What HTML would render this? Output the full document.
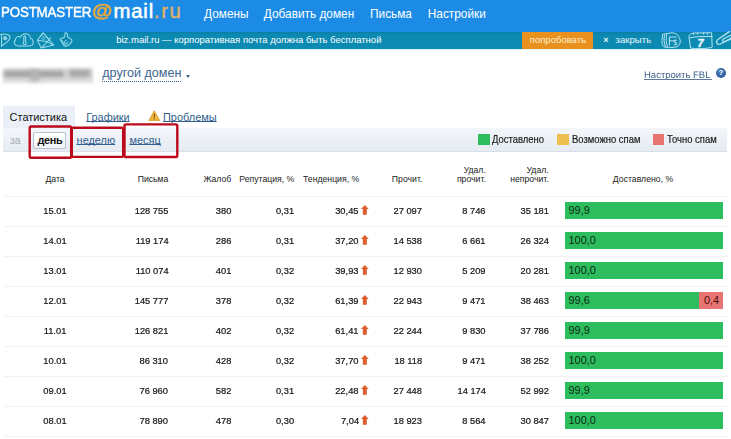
<!DOCTYPE html>
<html lang="ru"><head><meta charset="utf-8"><title>Postmaster Mail.ru</title>
<style>
html,body{margin:0;padding:0;background:#fff;}
*{text-decoration-skip-ink:none;}
body{width:731px;height:439px;position:relative;overflow:hidden;font-family:"Liberation Sans",sans-serif;color:#222;}
.abs{position:absolute;white-space:nowrap;}
#hdr{position:absolute;left:0;top:0;width:731px;height:32px;background:#1b8be6;}
#teal{position:absolute;left:0;top:31.8px;width:731px;height:17.5px;background:linear-gradient(#0a7fa6 0,#0c8ab1 3px,#0c8ab1 100%);}
#tealb{position:absolute;left:0;top:49.3px;width:731px;height:1.2px;background:linear-gradient(#cfe8f1,#fff);}
.nav{position:absolute;top:7px;font-size:11.85px;line-height:14px;color:#fff;white-space:nowrap;}
.logo1{position:absolute;left:1.3px;top:3.2px;font-size:15.5px;line-height:18px;color:#fff;letter-spacing:-0.2px;transform-origin:0 50%;transform:scaleX(0.86);white-space:nowrap;-webkit-text-stroke:0.45px #fff;}
.logoat{position:absolute;left:92.4px;top:-3.5px;font-size:19px;line-height:28px;color:#e9a93c;font-weight:bold;transform-origin:0 50%;transform:scaleX(1.1);-webkit-text-stroke:0.5px #e9a93c;}
.logo2{position:absolute;left:113.6px;top:-1px;font-size:20.3px;line-height:24px;color:#fff;letter-spacing:0.8px;white-space:nowrap;-webkit-text-stroke:0.55px #fff;}
.logo3{position:absolute;left:154px;top:-1px;font-size:20.3px;line-height:24px;color:#e2b163;white-space:nowrap;letter-spacing:1.6px;-webkit-text-stroke:0.4px #e2b163;}
.tt{position:absolute;top:33px;font-size:9.6px;line-height:13px;color:#fff;white-space:nowrap;}
#try{position:absolute;left:522px;top:31.8px;width:70.6px;height:17.5px;background:#e8911f;}
.dom{position:absolute;left:102.3px;top:66.8px;font-size:12.55px;line-height:13.9px;color:#3d658f;border-bottom:1px dotted #3d5f85;white-space:nowrap;}
.caret{position:absolute;left:185.5px;top:74.6px;width:0;height:0;border-left:2.7px solid transparent;border-right:2.7px solid transparent;border-top:3.1px solid #41648a;}
.fbl{position:absolute;left:644.1px;top:69.6px;font-size:9.55px;line-height:12px;color:#3b5f88;white-space:pre;text-rendering:geometricPrecision;transform:scaleX(0.995);transform-origin:0 50%;}
.help{position:absolute;left:716px;top:68.3px;width:10px;height:10px;border-radius:50%;background:radial-gradient(circle at 40% 35%,#4a7fbe,#1f4f8c);color:#fff;font-size:8px;line-height:10px;font-weight:bold;text-align:center;}
#tab1{position:absolute;left:2.5px;top:105.6px;width:72.3px;height:24px;background:#ebf0f8;}
.tab{position:absolute;top:110.8px;font-size:10.95px;line-height:13px;white-space:nowrap;}
a,.lnk{color:#335f8e;text-decoration:underline;text-underline-offset:0.3px;}
#tool{position:absolute;left:2.5px;top:128px;width:724.5px;height:24.4px;background:linear-gradient(#f3f6fa,#e6ebf2);border-bottom:1px solid #d9dfe7;box-sizing:border-box;}
.per{position:absolute;top:134px;font-size:10.95px;line-height:13px;white-space:nowrap;}
#day{position:absolute;left:33px;top:131.6px;width:33.4px;height:17px;box-sizing:border-box;border:1px solid #b9c3cf;border-radius:2px;background:linear-gradient(#fff,#f0f3f7);}
.rb{position:absolute;border:2.4px solid #bb0a1c;border-radius:2.5px;box-sizing:border-box;}
.lg{position:absolute;top:134px;height:11px;width:11.5px;}
.lgt{position:absolute;top:133px;font-size:10.8px;line-height:13px;white-space:nowrap;transform-origin:0 50%;transform:scaleX(0.875);color:#1c1c1c;-webkit-text-stroke:0.2px #1c1c1c;}
.th{position:absolute;font-size:8.68px;line-height:9px;color:#222;white-space:nowrap;}
.th.r{text-align:right;}
.row{position:absolute;left:0;width:731px;height:30px;}
.row:before{content:'';position:absolute;left:4px;top:0;width:724px;height:1px;background:#f0f1f4;}
.row .c{position:absolute;top:8.7px;font-size:9.8px;line-height:12px;white-space:nowrap;color:#151515;transform:scaleX(0.952);transform-origin:50% 50%;-webkit-text-stroke:0.22px #151515;}
.row .c.r{text-align:right;transform-origin:100% 50%;}
.row .arr{position:absolute;left:361.2px;top:8.8px;width:7.7px;height:10px;}
.row .bar{position:absolute;left:565px;top:6px;width:157.8px;height:17.3px;background:#2dbd5f;font-size:10.85px;line-height:17px;color:#0b2a12;box-sizing:border-box;padding-left:3.6px;white-space:nowrap;}
.row .bar.red{background:#e87573;color:#4a0d0d;padding-left:4.6px;}
</style></head><body>
<div id="hdr"></div>
<div class="logo1">POSTMASTER</div>
<div class="logoat">@</div>
<div class="logo2">mail</div>
<div class="logo3">.ru</div>
<div class="nav" style="left:204px">Домены</div>
<div class="nav" style="left:263.8px">Добавить домен</div>
<div class="nav" style="left:370px">Письма</div>
<div class="nav" style="left:427.8px">Настройки</div>
<div id="teal"></div><div id="tealb"></div>
<svg class="abs" style="left:0;top:31px;width:80px;height:19px" viewBox="0 31 80 19" fill="none" stroke="#9bdcee" stroke-width="1.05" stroke-linecap="round" stroke-linejoin="round">
<!-- pin -->
<path d="M1.6 35 V46.2 M-1 34.8 C3 33.8 8.2 33.8 9.8 36.4 C10.6 38.4 9.4 39.8 8 41.2 L1.4 46.4"/>
<circle cx="5.2" cy="38.2" r="2.1" fill="#8fcfe2" stroke="none"/>
<!-- cloud -->
<path d="M18.4 45.9 C14.4 46 13.2 42 15.4 40 C15.2 37 18.6 35.6 20.6 37.2 C21.6 34 25.6 32.8 28.4 34.6 C30.2 35.8 30.8 37.4 30.6 38.6 C33.6 39 34 43.4 32.2 45 C31.2 46 29.6 46 28 45.9 Z"/>
<path d="M23.8 37 v5 a1.5 1.5 0 1 0 1.8 0 v-5 a0.9 0.9 0 0 0 -1.8 0"/>
<!-- envelope -->
<path d="M37.4 40.2 L43 32.8 L53.6 45 L41.2 48 Z"/>
<path d="M37.4 40.2 L46.6 41.6 L53.6 45 M50.8 37.8 L41.8 47.6"/>
<path d="M40.4 36.6 L43.4 33 L48.8 39 M42.6 36.4 l2.6 1.6 M41.6 38.6 l2.4 0.8" stroke-width="0.9"/>
<!-- hand -->
<path d="M60 39.2 L64.6 37 L65.2 32.8 C67 32.4 68 34.6 67.6 36.8 L71.6 39.6 C72.6 41 71.4 42.6 70.4 43 C70.2 44.4 68.8 45.4 67.8 45.2 C66.8 46.2 65 46.2 63.8 45.6 Z"/>
<path d="M61.8 40.4 l3.4 5 M66 40.4 a1.7 1.7 0 1 0 2 1.8" stroke-width="0.9"/>
</svg>
<svg class="abs" style="left:655px;top:31px;width:76px;height:19px" viewBox="655 31 76 19" fill="none" stroke="#b4e4f2" stroke-width="1" stroke-linecap="round" stroke-linejoin="round">
<!-- wallet / money -->
<path d="M663 34.2 L672 32.8 C676 33 678.6 35 678.8 37.4 C680.6 38.6 680.8 43 679.2 44.6 C678.8 46.6 675.6 47.6 672 47.4 L665 47.2 C662.6 46.6 661.8 44.6 662 41 Z"/>
<path d="M664.6 35 C663.6 38.6 663.8 43.4 665.6 46.8 M666.6 34.6 C665.8 38.4 666 43.2 667.6 46.8"/>
<path d="M669.4 37 h6.6 M669.4 37 v8 M669.4 40.8 h5.2 M676.6 40.2 c-2.6 -0.6 -3.4 1.8 -1.2 2.4 c2.2 0.6 1.6 2.8 -1.2 2.2" stroke-width="1.1"/>
<!-- calendar -->
<path d="M689 36 C690 33.6 692 33 695 33 L711.6 32.8 L712.2 47.2 C708 48.8 696 48.8 691 48.2 Z"/>
<path d="M690 37.8 C696 36.4 706 36.2 712 36.6"/>
<path d="M693.4 33.6 v1.2 M697.4 33.2 v1.2 M703.6 33 v1.2 M707.6 33 v1.2" stroke-width="1"/>
<text x="697.4" y="46.6" font-family="Liberation Sans, sans-serif" font-size="11" font-weight="bold" font-style="italic" fill="#e6f6fb" stroke="#e6f6fb" stroke-width="0.4">7</text>
<!-- paperclip -->
<path d="M729.4 31.6 L718.2 39.2 C715.2 41.4 716.8 45.8 720.4 44 L733 37.2" stroke-width="1.3"/>
<path d="M733 34.2 L723.8 38.8 C721.8 39.8 722.6 42.4 724.8 41.4 L733 38.6" stroke-width="1.1"/>
</svg>

<div class="tt" style="left:116.2px;font-size:9.5px">biz.mail.ru — корпоративная почта должна быть бесплатной</div>
<div id="try"></div>
<div class="tt" style="left:529.8px;font-size:9.5px;color:#fff1cf">попробовать</div>
<div class="tt" style="left:603.3px;font-size:9px;top:33.6px;font-weight:bold;color:#e4f4fb">×</div>
<div class="tt" style="left:615.6px;font-size:9.6px;color:#e8f6fc">закрыть</div>

<div class="abs" style="left:0;top:60px;width:100px;height:30px;overflow:hidden">
<div style="position:absolute;left:3px;top:7.6px;width:90px;height:15px;background:#dedede;filter:blur(1.8px)"></div>
<div style="position:absolute;left:4px;top:10.8px;width:60px;height:6.5px;background:#9c9c9e;filter:blur(2px)"></div>
<div style="position:absolute;left:69px;top:9.8px;width:21px;height:7px;background:#a2a2a4;filter:blur(2px)"></div>
<div style="position:absolute;left:30px;top:10px;width:9px;height:11px;background:#b4b4b4;filter:blur(2px)"></div>
</div>
<div class="dom">другой домен</div><div class="caret"></div>
<div class="fbl">Настроить FBL</div><div class="abs" style="left:644px;top:79px;width:68.2px;height:1px;background:#5d7a9c"></div>
<div class="help">?</div>

<div id="tab1"></div>
<div class="tab" style="left:9.6px;color:#111">Статистика</div>
<div class="tab lnk" style="left:86.2px">Графики</div>
<svg class="abs" style="left:147.6px;top:110.3px;width:12.6px;height:11.2px" viewBox="0 0 13 12"><path d="M6.5 0.8 L12.3 11.2 H0.7 Z" fill="#f0b83c" stroke="#d89a1c" stroke-width="0.8" stroke-linejoin="round"/><rect x="5.9" y="4" width="1.2" height="4" fill="#7a4a00"/><rect x="5.9" y="8.8" width="1.2" height="1.2" fill="#7a4a00"/></svg>
<div class="tab lnk" style="left:163px">Проблемы</div>
<div id="tool"></div>
<div class="per" style="left:10px;color:#a3aab4;font-size:10.3px">за</div>
<div id="day"></div>
<div class="per" style="left:37.6px;color:#111;font-weight:bold;letter-spacing:-0.45px">день</div>
<div class="per lnk" style="left:76.6px">неделю</div>
<div class="per lnk" style="left:129.4px">месяц</div>

<svg class="abs" style="left:20px;top:118px;width:170px;height:46px" viewBox="20 118 170 46" fill="none" stroke="#bb0a1c" stroke-width="2.4">
<rect x="29.7" y="126.5" width="41.5" height="31.3" rx="1.6"/>
<rect x="71.8" y="127.7" width="51.4" height="29.2" rx="1.6"/>
<rect x="124.5" y="124.4" width="52.8" height="32.6" rx="1.6"/>
</svg>
<div class="lg" style="left:478px;background:#2dbd5f"></div><div class="lgt" style="left:492.4px">Доставлено</div>
<div class="lg" style="left:557.3px;background:#ecc04e"></div><div class="lgt" style="left:571.8px">Возможно спам</div>
<div class="lg" style="left:652.8px;background:#e8746f"></div><div class="lgt" style="left:667.4px">Точно спам</div>

<div class="th" style="left:30px;width:50px;text-align:center;top:175px">Дата</div>
<div class="th r" style="right:562.6px;top:175px">Письма</div>
<div class="th r" style="right:499.7px;top:175px">Жалоб</div>
<div class="th r" style="right:436.7px;top:175px">Репутация, %</div>
<div class="th r" style="right:371.8px;top:175px">Тенденция, %</div>
<div class="th r" style="right:308.7px;top:175px">Прочит.</div>
<div class="th r" style="right:245.2px;top:166.3px">Удал.<br>прочит.</div>
<div class="th r" style="right:182.3px;top:166.3px">Удал.<br>непрочит.</div>
<div class="th" style="left:593px;width:100px;text-align:center;top:175px">Доставлено, %</div>
<div class="row" style="top:196px">
<span class="c" style="left:30px;width:50px;text-align:center">15.01</span>
<span class="c r" style="right:562.6px">128 755</span>
<span class="c r" style="right:499.7px">380</span>
<span class="c r" style="right:436.5px">0,31</span>
<span class="c r" style="right:372.2px">30,45</span>
<span class="c r" style="right:308.7px">27 097</span>
<span class="c r" style="right:245.5px">8 746</span>
<span class="c r" style="right:181.7px">35 181</span>
<svg class="arr" viewBox="0 0 7.7 10"><path d="M3.85 0 L7.7 3.9 H5.85 V9.6 Q3.85 10.4 1.85 9.6 V3.9 H0 Z" fill="#dd5f30"/></svg>
<span class="bar">99,9</span>
</div>
<div class="row" style="top:226px">
<span class="c" style="left:30px;width:50px;text-align:center">14.01</span>
<span class="c r" style="right:562.6px">119 174</span>
<span class="c r" style="right:499.7px">286</span>
<span class="c r" style="right:436.5px">0,31</span>
<span class="c r" style="right:372.2px">37,20</span>
<span class="c r" style="right:308.7px">14 538</span>
<span class="c r" style="right:245.5px">6 661</span>
<span class="c r" style="right:181.7px">26 324</span>
<svg class="arr" viewBox="0 0 7.7 10"><path d="M3.85 0 L7.7 3.9 H5.85 V9.6 Q3.85 10.4 1.85 9.6 V3.9 H0 Z" fill="#dd5f30"/></svg>
<span class="bar">100,0</span>
</div>
<div class="row" style="top:256px">
<span class="c" style="left:30px;width:50px;text-align:center">13.01</span>
<span class="c r" style="right:562.6px">110 074</span>
<span class="c r" style="right:499.7px">401</span>
<span class="c r" style="right:436.5px">0,32</span>
<span class="c r" style="right:372.2px">39,93</span>
<span class="c r" style="right:308.7px">12 930</span>
<span class="c r" style="right:245.5px">5 209</span>
<span class="c r" style="right:181.7px">20 281</span>
<svg class="arr" viewBox="0 0 7.7 10"><path d="M3.85 0 L7.7 3.9 H5.85 V9.6 Q3.85 10.4 1.85 9.6 V3.9 H0 Z" fill="#dd5f30"/></svg>
<span class="bar">100,0</span>
</div>
<div class="row" style="top:286px">
<span class="c" style="left:30px;width:50px;text-align:center">12.01</span>
<span class="c r" style="right:562.6px">145 777</span>
<span class="c r" style="right:499.7px">378</span>
<span class="c r" style="right:436.5px">0,32</span>
<span class="c r" style="right:372.2px">61,39</span>
<span class="c r" style="right:308.7px">22 943</span>
<span class="c r" style="right:245.5px">9 471</span>
<span class="c r" style="right:181.7px">38 463</span>
<svg class="arr" viewBox="0 0 7.7 10"><path d="M3.85 0 L7.7 3.9 H5.85 V9.6 Q3.85 10.4 1.85 9.6 V3.9 H0 Z" fill="#dd5f30"/></svg>
<span class="bar" style="width:134.3px">99,6</span><span class="bar red" style="left:699.3px;width:23.5px">0,4</span>
</div>
<div class="row" style="top:316px">
<span class="c" style="left:30px;width:50px;text-align:center">11.01</span>
<span class="c r" style="right:562.6px">126 821</span>
<span class="c r" style="right:499.7px">402</span>
<span class="c r" style="right:436.5px">0,32</span>
<span class="c r" style="right:372.2px">61,41</span>
<span class="c r" style="right:308.7px">22 244</span>
<span class="c r" style="right:245.5px">9 830</span>
<span class="c r" style="right:181.7px">37 786</span>
<svg class="arr" viewBox="0 0 7.7 10"><path d="M3.85 0 L7.7 3.9 H5.85 V9.6 Q3.85 10.4 1.85 9.6 V3.9 H0 Z" fill="#dd5f30"/></svg>
<span class="bar">99,9</span>
</div>
<div class="row" style="top:346px">
<span class="c" style="left:30px;width:50px;text-align:center">10.01</span>
<span class="c r" style="right:562.6px">86 310</span>
<span class="c r" style="right:499.7px">428</span>
<span class="c r" style="right:436.5px">0,32</span>
<span class="c r" style="right:372.2px">37,70</span>
<span class="c r" style="right:308.7px">18 118</span>
<span class="c r" style="right:245.5px">9 471</span>
<span class="c r" style="right:181.7px">38 252</span>
<svg class="arr" viewBox="0 0 7.7 10"><path d="M3.85 0 L7.7 3.9 H5.85 V9.6 Q3.85 10.4 1.85 9.6 V3.9 H0 Z" fill="#dd5f30"/></svg>
<span class="bar">100,0</span>
</div>
<div class="row" style="top:376px">
<span class="c" style="left:30px;width:50px;text-align:center">09.01</span>
<span class="c r" style="right:562.6px">76 960</span>
<span class="c r" style="right:499.7px">582</span>
<span class="c r" style="right:436.5px">0,31</span>
<span class="c r" style="right:372.2px">22,48</span>
<span class="c r" style="right:308.7px">27 448</span>
<span class="c r" style="right:245.5px">14 174</span>
<span class="c r" style="right:181.7px">52 992</span>
<svg class="arr" viewBox="0 0 7.7 10"><path d="M3.85 0 L7.7 3.9 H5.85 V9.6 Q3.85 10.4 1.85 9.6 V3.9 H0 Z" fill="#dd5f30"/></svg>
<span class="bar">99,9</span>
</div>
<div class="row" style="top:406px">
<span class="c" style="left:30px;width:50px;text-align:center">08.01</span>
<span class="c r" style="right:562.6px">78 890</span>
<span class="c r" style="right:499.7px">478</span>
<span class="c r" style="right:436.5px">0,30</span>
<span class="c r" style="right:372.2px">7,04</span>
<span class="c r" style="right:308.7px">18 923</span>
<span class="c r" style="right:245.5px">8 564</span>
<span class="c r" style="right:181.7px">30 847</span>
<svg class="arr" viewBox="0 0 7.7 10"><path d="M3.85 0 L7.7 3.9 H5.85 V9.6 Q3.85 10.4 1.85 9.6 V3.9 H0 Z" fill="#dd5f30"/></svg>
<span class="bar">100,0</span>
</div>
<div class="row" style="top:436px;height:3px"></div>
</body></html>
